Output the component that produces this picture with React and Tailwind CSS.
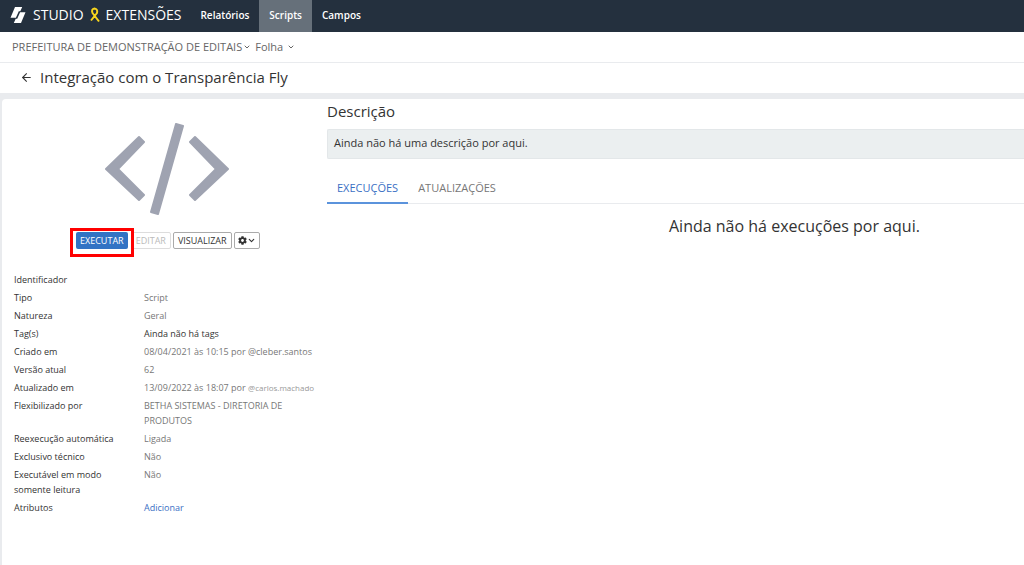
import React from 'react';
import { FaCog } from 'react-icons/fa';
import { ArrowLeft, ChevronDown } from 'lucide-react';

const navItems = [
  { name: 'Relatórios', path: '#relatorios' },
  { name: 'Scripts', path: '#scripts', active: true },
  { name: 'Campos', path: '#campos' },
];

const details = [
  { label: 'Identificador', value: '' },
  { label: 'Tipo', value: 'Script' },
  { label: 'Natureza', value: 'Geral' },
  { label: 'Tag(s)', value: <span className="text-[#333]">Ainda não há tags</span> },
  { label: 'Criado em', value: '08/04/2021 às 10:15 por @cleber.santos' },
  { label: 'Versão atual', value: '62' },
  {
    label: 'Atualizado em',
    value: (
      <>
        13/09/2022 às 18:07 por <span className="text-[8px] leading-none text-[#999]">@carlos.machado</span>
      </>
    ),
  },
  { label: 'Flexibilizado por', value: 'BETHA SISTEMAS - DIRETORIA DE PRODUTOS' },
  { label: 'Reexecução automática', value: 'Ligada' },
  { label: 'Exclusivo técnico', value: 'Não' },
  { label: 'Executável em modo somente leitura', value: 'Não' },
  { label: 'Atributos', value: <a href="#atributos" className="text-[#3a6fc4]">Adicionar</a> },
];

const Logo = () => (
  <svg viewBox="0 0 16 18" className="w-4 h-[18px]" fill="#fff" aria-hidden="true">
    <path d="M5 1H12.200L10.300 5.200H8.800L5.900 11.800H.5Z" />
    <path d="M11 17H3.800L5.700 12.800H7.200L10.100 6.200H15.500Z" />
  </svg>
);

const Ribbon = () => (
  <svg viewBox="0 0 12 16" className="w-3 h-4" fill="none" stroke="#f7d51d" strokeWidth="2" aria-hidden="true">
    <path d="M10 14.500L3.500 6Q2 2 5.500 1.500Q9 2 8 6L2 13.500" strokeLinejoin="round" />
  </svg>
);

const CodeIcon = () => (
  <svg viewBox="0 0 124 92" className="w-[124px] h-[92px]" fill="#9fa3b1" stroke="#9fa3b1" strokeWidth="2" strokeLinejoin="round" aria-hidden="true">
    <path d="M34 14L39 19L13 46L39 72L34 77L1 46Z" />
    <path d="M90 14L85 19L111 46L85 72L90 77L123 46Z" />
    <path d="M71 1L78 3L53 91L46 89Z" />
  </svg>
);

const App = () => {
  return (
    <div className="min-h-screen flex flex-col bg-white text-[#333] font-['Open_Sans',sans-serif]">
      <header className="flex h-8 items-center bg-[#24303e] text-white">
        <div className="flex items-center pb-[3px] pl-[10px] text-sm">
          <Logo />
          <span className="ml-[7px]">STUDIO</span>
          <span className="mx-[5px]"><Ribbon /></span>
          <span>EXTENSÕES</span>
        </div>
        <nav className="ml-[9px] flex h-full text-[10px] font-semibold">
          {navItems.map((item) => (
            <a
              key={item.name}
              href={item.path}
              className={`flex items-center px-[10px] pb-[2px] ${item.active ? 'bg-[#66707a]' : ''}`}
            >
              {item.name}
            </a>
          ))}
        </nav>
      </header>

      <div className="flex h-[31px] items-center gap-1 border-b border-[#e9ebee] pl-3 text-[11px] text-[#666]">
        <button className="flex items-center gap-px">
          PREFEITURA DE DEMONSTRAÇÃO DE EDITAIS
          <ChevronDown size={8} strokeWidth={3} />
        </button>
        <button className="flex items-center gap-1">
          Folha
          <ChevronDown size={8} strokeWidth={3} />
        </button>
      </div>

      <div className="flex h-[30px] items-center gap-[7px] pb-[2px] pl-5">
        <a href="#voltar" aria-label="Voltar"><ArrowLeft size={13} /></a>
        <h1 className="text-[15px]">Integração com o Transparência Fly</h1>
      </div>

      <div className="flex grow flex-col bg-[#e9ebee] pl-[2px] pt-[6px]">
        <main className="flex grow rounded-tl-sm bg-white">
          {/* Script summary */}
          <aside className="w-[325px] shrink-0 pl-3 pt-6">
            <div className="flex justify-center pr-[8px]">
              <CodeIcon />
            </div>

            <div className="mt-[13px] flex items-start pl-[56px] text-[9px]">
              <div className="z-10 border-[3px] border-[#f00] bg-white px-[3px] pt-px pb-[5px]">
                <button className="block h-[17px] rounded-xs bg-[#3273c4] px-[4px] text-white">EXECUTAR</button>
              </div>
              <button disabled className="-ml-[3px] mt-1 h-[17px] rounded-xs border border-[#ddd] px-[4px] text-[#bbb]">EDITAR</button>
              <button className="ml-[2px] mt-1 h-[17px] rounded-xs border border-[#aaa] px-[4px]">VISUALIZAR</button>
              <button aria-label="Opções" className="ml-[2px] mt-1 flex h-[17px] items-center rounded-xs border border-[#aaa] px-[3px]">
                <FaCog size={9} />
                <ChevronDown size={9} strokeWidth={3} />
              </button>
            </div>

            <dl className="mt-[15px] flex flex-col gap-[3px] text-[9px] leading-[15px]">
              {details.map((item) => (
                <div key={item.label} className="flex">
                  <dt className="w-[130px] shrink-0 pr-5">{item.label}</dt>
                  <dd className="w-[175px] text-[#777]">{item.value}</dd>
                </div>
              ))}
            </dl>
          </aside>

          <section className="min-w-0 grow">
            <h2 className="text-[15px] leading-6">Descrição</h2>
            <p className="mt-[6px] rounded-l-xs border-y border-l border-[#e3e7e9] bg-[#ebeff0] px-[6px] pt-[5px] pb-[7px] text-[11px] leading-4">
              Ainda não há uma descrição por aqui.
            </p>

            <div className="mt-[15px] flex border-b border-[#e9ebee] text-[11px]" role="tablist">
              <button role="tab" aria-selected="true" className="-mb-px h-[30px] border-b-2 border-[#5b93dc] px-[10px] text-[#3a6fc4]">
                EXECUÇÕES
              </button>
              <button role="tab" aria-selected="false" className="px-[10px] text-[#777]">ATUALIZAÇÕES</button>
            </div>

            <p className="mt-[10px] pl-[342px] text-base">Ainda não há execuções por aqui.</p>
          </section>
        </main>
      </div>
    </div>
  );
};

export default App;
